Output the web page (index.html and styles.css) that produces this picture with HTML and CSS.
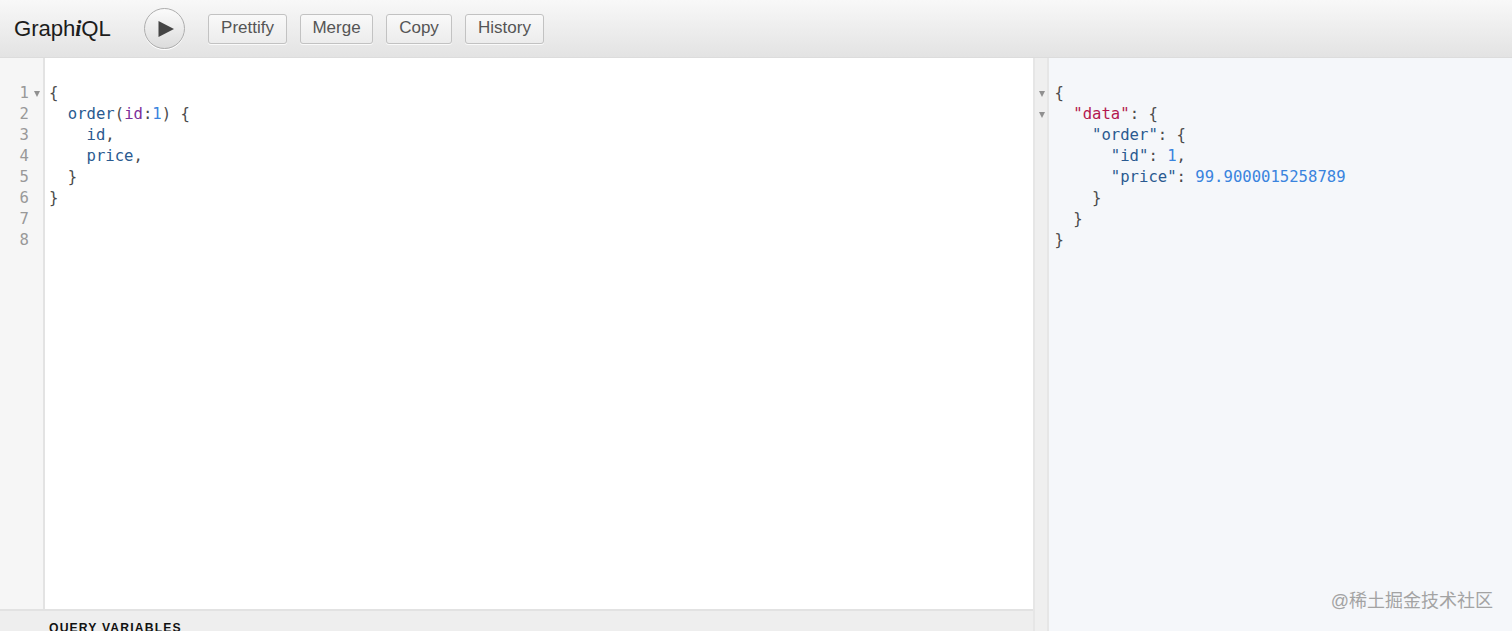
FILE: index.html
```html
<!DOCTYPE html>
<html lang="en">
<head>
<meta charset="utf-8">
<title>GraphiQL</title>
<link rel="stylesheet" href="styles.css">
</head>
<body>
<div class="app">
  <header class="topbar">
    <div class="logo">Graph<em>i</em>QL</div>
    <button class="run" aria-label="Execute query">
      <svg width="20" height="22" viewBox="0 0 20 22"><path d="M2.5 3 L18 11 L2.5 19 Z" fill="#444"/></svg>
    </button>
    <button class="tool prettify">Prettify</button>
    <button class="tool merge">Merge</button>
    <button class="tool copy">Copy</button>
    <button class="tool history">History</button>
  </header>
  <main class="panes">
    <section class="query-pane">
      <div class="editor">
        <div class="gutter">
          <div class="ln">1<i class="fold"></i></div>
          <div class="ln">2</div>
          <div class="ln">3</div>
          <div class="ln">4</div>
          <div class="ln">5</div>
          <div class="ln">6</div>
          <div class="ln">7</div>
          <div class="ln">8</div>
        </div>
        <pre class="code"><span class="p">{</span>
  <span class="f">order</span><span class="p">(</span><span class="a">id</span><span class="p">:</span><span class="n">1</span><span class="p">) {</span>
    <span class="f">id</span><span class="p">,</span>
    <span class="f">price</span><span class="p">,</span>
  <span class="p">}</span>
<span class="p">}</span></pre>
      </div>
      <div class="vars-bar">QUERY VARIABLES</div>
    </section>
    <div class="divider"></div>
    <section class="result-pane">
      <div class="result-gutter">
        <div class="rl"><i class="fold"></i></div>
        <div class="rl"><i class="fold"></i></div>
      </div>
      <pre class="code result"><span class="p">{</span>
  <span class="k">"data"</span><span class="p">: {</span>
    <span class="f">"order"</span><span class="p">: {</span>
      <span class="f">"id"</span><span class="p">:</span> <span class="n">1</span><span class="p">,</span>
      <span class="f">"price"</span><span class="p">:</span> <span class="n">99.9000015258789</span>
    <span class="p">}</span>
  <span class="p">}</span>
<span class="p">}</span></pre>
      <div class="mark">@稀土掘金技术社区</div>
    </section>
  </main>
</div>
</body>
</html>
```

FILE: styles.css
```css
* { box-sizing: border-box; }
html, body { margin: 0; height: 100%; overflow: hidden; }
body { font-family: "Liberation Sans", Arial, sans-serif; background: #fff; }
.app { display: flex; flex-direction: column; height: 631px; }

.topbar {
  height: 58px;
  flex: none;
  display: flex;
  align-items: center;
  background: linear-gradient(#f8f8f8, #e3e3e3);
  border-bottom: 1px solid #dcdcdc;
  padding: 0 0 0 14px;
}
.logo { font-size: 22.2px; color: #1c1c1c; width: 130px; letter-spacing: -0.1px; }
.logo em { font-family: "Liberation Serif", serif; font-style: italic; font-weight: 700; }
.run {
  width: 41px; height: 41px;
  padding: 0 0 0 3px;
  flex: none;
  border-radius: 50%;
  border: 1px solid #adadad;
  background: linear-gradient(#fbfbfb, #dcdcdc);
  box-shadow: 0 1px 0 #fff;
  display: flex; align-items: center; justify-content: center;
  margin-right: 23px;
}
.tool {
  height: 30px;
  padding: 0 0 1px;
  flex: none;
  font: 17px "Liberation Sans", Arial, sans-serif;
  color: #555;
  border: 1px solid #c2c2c2;
  border-radius: 3px;
  background: linear-gradient(#f9f9f9, #ececec);
  box-shadow: 0 1px 0 #fafafa;
  margin-right: 13px;
}
.prettify { width: 79px; }
.merge { width: 73px; }
.copy { width: 66px; }
.history { width: 79px; }

.panes { flex: 1; display: flex; min-height: 0; }
.query-pane { width: 1033px; flex: none; display: flex; flex-direction: column; background: #fff; }
.editor { flex: 1; display: flex; min-height: 0; }
.gutter {
  width: 45px; flex: none;
  background: #f6f6f6;
  border-right: 2px solid #e3e3e3;
  padding-top: 25px;
}
.ln {
  position: relative;
  height: 21px;
  width: 29px;
  text-align: right;
  font: 15.6px/21px "DejaVu Sans Mono", monospace;
  color: #999;
}
.fold {
  display: block;
  width: 0; height: 0;
  border-left: 3.5px solid transparent;
  border-right: 3.5px solid transparent;
  border-top: 6px solid #909090;
}
.ln .fold { position: absolute; left: 34px; top: 8px; }
.code {
  margin: 0;
  padding: 25px 0 0 4px;
  font: 15.6px/21px "DejaVu Sans Mono", monospace;
  color: #4a4a4a;
}
.p { color: #4a4a4a; }
.f { color: #2a5a90; }
.a { color: #7b2e9b; }
.n { color: #3a84de; }
.k { color: #b3174f; }
.vars-bar {
  height: 22px;
  flex: none;
  background: #eeeeee;
  border-top: 2px solid #e2e2e2;
  padding: 10px 0 0 49px;
  font-size: 12.2px;
  line-height: 14px;
  font-weight: 700;
  letter-spacing: 1.15px;
  color: #111;
  overflow: hidden;
}
.divider {
  width: 16px; flex: none;
  background: #efefef;
  border-left: 2px solid #e6e6e6;
  border-right: 2px solid #e6e6e6;
}
.result-pane { flex: 1; display: flex; position: relative; background: #f5f7fa; }
.result-gutter { width: 5.5px; flex: none; padding-top: 25px; position: relative; }
.rl { height: 21px; position: relative; }
.rl .fold { position: absolute; left: -10px; top: 8px; }
.result { padding-left: 0; }
.mark {
  position: absolute;
  right: 19px; top: 532px;
  font-size: 18px;
  line-height: 22px;
  color: #a3a3a3;
  font-family: "Liberation Sans", "Noto Sans CJK SC", sans-serif;
}
```
